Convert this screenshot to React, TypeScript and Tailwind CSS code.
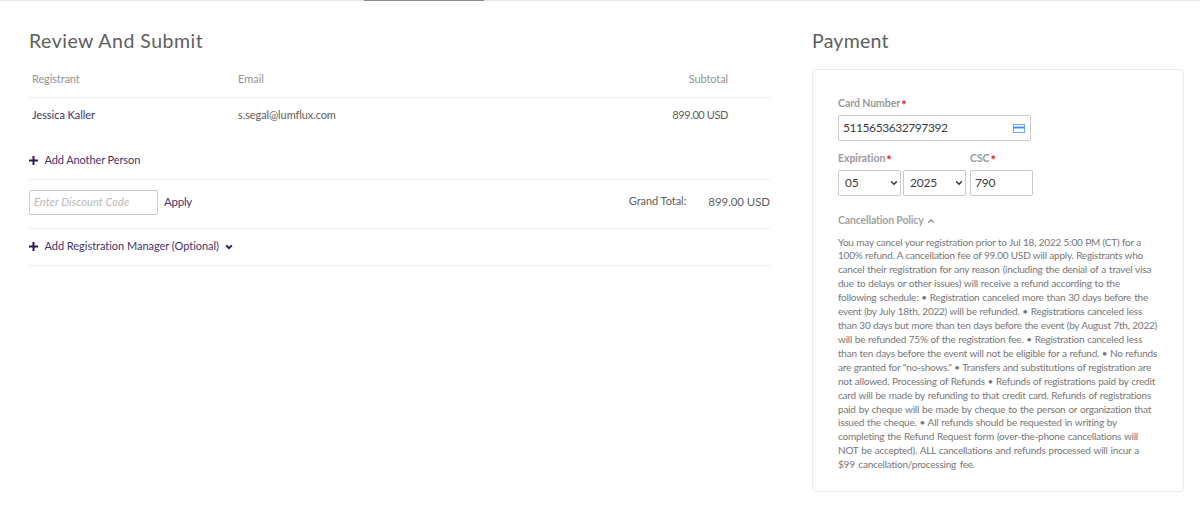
import type { ReactNode } from "react";

const policy = [
  { width: "w-[303px]", text: "You may cancel your registration prior to Jul 18, 2022 5:00 PM (CT) for a" },
  { width: "w-[305px]", text: "100% refund. A cancellation fee of 99.00 USD will apply. Registrants who" },
  { width: "w-[313px]", text: "cancel their registration for any reason (including the denial of a travel visa" },
  { width: "w-[282px]", text: "due to delays or other issues) will receive a refund according to the" },
  { width: "w-[310px]", text: "following schedule: • Registration canceled more than 30 days before the" },
  { width: "w-[304px]", text: "event (by July 18th, 2022) will be refunded. • Registrations canceled less" },
  { width: "w-[319px]", text: "than 30 days but more than ten days before the event (by August 7th, 2022)" },
  { width: "w-[304px]", text: "will be refunded 75% of the registration fee. • Registration canceled less" },
  { width: "w-[319px]", text: "than ten days before the event will not be eligible for a refund. • No refunds" },
  { width: "w-[313px]", text: "are granted for \"no-shows.\" • Transfers and substitutions of registration are" },
  { width: "w-[317px]", text: "not allowed. Processing of Refunds • Refunds of registrations paid by credit" },
  { width: "w-[313px]", text: "card will be made by refunding to that credit card. Refunds of registrations" },
  { width: "w-[313px]", text: "paid by cheque will be made by cheque to the person or organization that" },
  { width: "w-[279px]", text: "issued the cheque. • All refunds should be requested in writing by" },
  { width: "w-[300px]", text: "completing the Refund Request form (over-the-phone cancellations will" },
  { width: "w-[301px]", text: "NOT be accepted). ALL cancellations and refunds processed will incur a" },
  { width: "w-[137px]", text: "$99 cancellation/processing fee." },
];

function Plus() {
  return (
    <svg viewBox="0 0 9 9" className="mr-[6.5px] size-[9px] shrink-0">
      <path d="M4.5 0v9M0 4.5h9" stroke="#2a1a55" strokeWidth="2" />
    </svg>
  );
}

function Chevron({ className }: { className: string }) {
  return (
    <svg viewBox="0 0 8 6" className={className} fill="none" stroke="currentColor">
      <path d="M1.2 1.4 4 4.2 6.8 1.4" />
    </svg>
  );
}

function Label({ children }: { children: ReactNode }) {
  return (
    <div className="flex h-4 items-center text-[10.5px] font-bold tracking-[-0.05px] text-[#9a9a9a]">
      {children}
      <span className="ml-px h-4 text-[13px] leading-[19px] text-[#e0142f]">*</span>
    </div>
  );
}

export default function App() {
  return (
    <div className="h-[511px] w-[1200px] overflow-hidden bg-white font-['Lato',sans-serif] whitespace-nowrap text-[#606060]">
      <div className="h-px bg-[#e6e6e6]">
        <div className="ml-[364px] h-px w-[120px] bg-[#858585]" />
      </div>
      <div className="flex pl-[29px]">
        <main className="w-[741px]">
          <h1 className="mt-[26px] h-[28px] text-[19.5px] leading-[28px] tracking-[0.5px]">Review And Submit</h1>
          <div className="mt-[7px] flex h-[36px] items-center border-b border-[#efefef] pr-[42px] pb-px pl-[3px] text-[11px] leading-4 text-[#949494]">
            <span className="w-[206px] tracking-[-0.12px]">Registrant</span>
            <span className="flex-1">Email</span>
            <span className="tracking-[-0.1px]">Subtotal</span>
          </div>
          <div className="flex h-[35px] items-center pr-[42px] pb-px pl-[3px] text-[11px] leading-4">
            <span className="w-[206px] tracking-[-0.05px] text-[#43346b]">Jessica Kaller</span>
            <span className="flex-1 tracking-[-0.1px]">s.segal@lumflux.com</span>
            <span className="tracking-[-0.4px]">899.00 USD</span>
          </div>
          <div className="mt-[7px] flex h-[40px] items-center border-b border-[#efefef] pt-px text-[11px] text-[#43346b]">
            <Plus />
            <span className="tracking-[-0.1px]">Add Another Person</span>
          </div>
          <div className="flex h-[49px] items-center border-b border-[#efefef] pb-[4px]">
            <div className="flex h-[25px] w-[129px] items-center rounded-[2px] border border-[#c9c9c9] pl-1 text-[11px] tracking-[0.1px] text-[#b9b9b9] italic">
              Enter Discount Code
            </div>
            <span className="ml-[6px] text-[11.5px] tracking-[-0.25px] text-[#43346b]">Apply</span>
            <span className="ml-auto pb-px text-[11px] tracking-[-0.05px]">Grand Total:</span>
            <span className="ml-[22px] text-[11.5px] tracking-[-0.08px]">899.00 USD</span>
          </div>
          <div className="flex h-[37px] items-center border-b border-[#efefef] pb-px text-[11px] text-[#43346b]">
            <Plus />
            <span className="tracking-[-0.03px]">Add Registration Manager (Optional)</span>
            <Chevron className="ml-[6px] h-[6px] w-2 stroke-2 text-[#2a1a55]" />
          </div>
        </main>
        <section className="ml-[42px] w-[372px]">
          <h2 className="mt-[26px] h-[28px] text-[19.5px] leading-[28px] tracking-[0.25px]">Payment</h2>
          <div className="mt-[14px] h-[423px] rounded-[4px] border border-[#ececec] pt-[26px] pl-[25px]">
            <Label>Card Number</Label>
            <div className="mt-[3px] flex h-[26px] w-[193px] items-center justify-between rounded-[2px] border border-[#cacaca] pr-[5px] pl-1 text-[12px] text-[#3c3c3c]">
              <span className="tracking-[-0.43px]">5115653632797392</span>
              <svg viewBox="0 0 12 9" className="h-[9px] w-3">
                <rect x=".5" y=".5" width="11" height="8" fill="#fff" stroke="#6aaaf0" />
                <path d="M0 3.5h12" stroke="#4496ea" strokeWidth="2" />
              </svg>
            </div>
            <div className="mt-[10px] flex">
              <div className="w-[132px]"><Label>Expiration</Label></div>
              <Label>CSC</Label>
            </div>
            <div className="mt-[3px] flex text-[12px] tracking-[-0.2px] text-[#3c3c3c]">
              <div className="flex h-[26px] w-[63px] items-center justify-between rounded-[2px] border border-[#cacaca] pr-[2px] pl-[6px]">
                05
                <Chevron className="h-[6px] w-2 stroke-[1.5]" />
              </div>
              <div className="ml-[2px] flex h-[26px] w-[63px] items-center justify-between rounded-[2px] border border-[#cacaca] pr-[2px] pl-[6px]">
                2025
                <Chevron className="h-[6px] w-2 stroke-[1.5]" />
              </div>
              <div className="ml-[4px] flex h-[26px] w-[63px] items-center rounded-[2px] border border-[#cacaca] pl-1">790</div>
            </div>
            <div className="mt-[17px] flex h-4 items-center text-[10.5px] font-bold tracking-[-0.15px] text-[#a3a3a3]">
              Cancellation Policy
              <Chevron className="ml-[3px] h-[6px] w-2 rotate-180 stroke-[1.3] text-[#888]" />
            </div>
            <div className="mt-[6.5px] text-[10px] leading-[13.92px] tracking-[-0.23px] text-[#777]">
              {policy.map((line) => (
                <div key={line.text} className={`${line.width} whitespace-normal [text-align-last:justify]`}>
                  {line.text}
                </div>
              ))}
            </div>
          </div>
        </section>
      </div>
    </div>
  );
}
